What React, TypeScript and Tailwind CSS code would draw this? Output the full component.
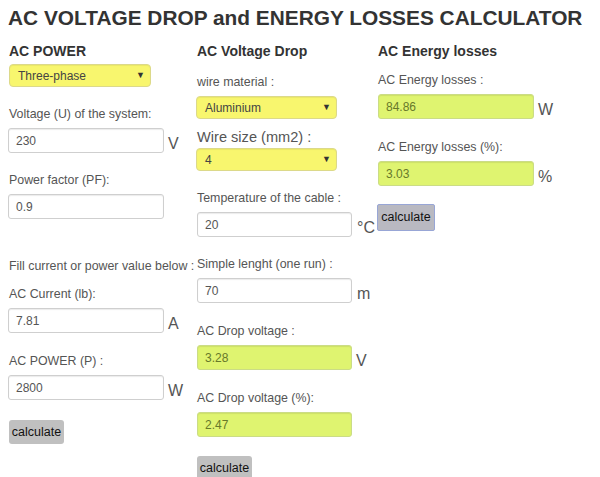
import React from "react";

function Label({ children, cls = "", big = false }: { children: React.ReactNode; cls?: string; big?: boolean }) {
  return (
    <div
      className={
        (big ? "text-[14.6px] leading-[18px] " : "text-[12.4px] leading-[16px] ") +
        "text-[#555] whitespace-nowrap " +
        cls
      }
    >
      {children}
    </div>
  );
}

function Field({
  value,
  unit,
  green = false,
  w = "w-[156px]",
  cls = "mt-[6px]",
  unitCls = "ml-1",
}: {
  value: string;
  unit?: string;
  green?: boolean;
  w?: string;
  cls?: string;
  unitCls?: string;
}) {
  return (
    <div className={"flex items-center " + cls}>
      <div
        className={
          w +
          " h-[25px] rounded-[3px] border pl-[7px] flex items-center text-[12px] shadow-[inset_0_1px_1px_rgba(0,0,0,0.08)] " +
          (green
            ? "bg-[#dff470] border-[#cbdc86] text-[#67792a]"
            : "bg-white border-[#cfcfcf] text-[#555]")
        }
      >
        {value}
      </div>
      {unit && <span className={"mt-[6px] text-[16px] leading-[18px] text-[#555] " + unitCls}>{unit}</span>}
    </div>
  );
}

function Select({ value, w, cls }: { value: string; w: string; cls: string }) {
  return (
    <div
      className={
        w +
        " h-[23px] rounded-[4px] border border-[#dcd98a] bg-[#f8f66e] flex items-center justify-between pl-[8px] pr-[5px] text-[12px] text-[#444] shadow-[inset_0_1px_1px_rgba(0,0,0,0.06)] " +
        cls
      }
    >
      <span>{value}</span>
      <span className="text-[9px] leading-[9px] text-[#333]">▼</span>
    </div>
  );
}

function Heading({ children }: { children: React.ReactNode }) {
  return <div className="text-[14px] leading-[16px] font-bold text-[#333] whitespace-nowrap">{children}</div>;
}

export default function App() {
  return (
    <div className="w-[600px] h-[477px] overflow-hidden bg-white font-['Liberation_Sans',Arial,sans-serif]">
      <div className="pl-2 pt-[6px] text-[20.85px] leading-[24px] font-bold text-[#333] whitespace-nowrap">
        AC VOLTAGE DROP and ENERGY LOSSES CALCULATOR
      </div>
      <div className="flex px-2 mt-[13px]">
        {/* Column 1 */}
        <div className="w-[189px] flex flex-col">
          <div className="ml-[1px]">
            <Heading>AC POWER</Heading>
          </div>
          <Select value="Three-phase" w="w-[142px]" cls="ml-[1px] mt-[5px]" />
          <Label cls="ml-[1px] mt-[19px]">Voltage (U) of the system:</Label>
          <Field value="230" unit="V" />
          <Label cls="ml-[1px] mt-[19px]">Power factor (PF):</Label>
          <Field value="0.9" />
          <Label cls="ml-[1px] mt-[39px]">Fill current or power value below :</Label>
          <Label cls="ml-[1px] mt-[12px]">AC Current (lb):</Label>
          <Field value="7.81" unit="A" />
          <Label cls="ml-[1px] mt-[20px]">AC POWER (P) :</Label>
          <Field value="2800" unit="W" />
          <div className="mt-[19px]">
            <button className="ml-[1px] w-[55px] h-[24px] rounded-[3px] bg-[#c0c0c0] text-[12.5px] text-[#111]">
              calculate
            </button>
          </div>
        </div>

        {/* Column 2 */}
        <div className="w-[181px] flex flex-col">
          <Heading>AC Voltage Drop</Heading>
          <Label cls="mt-[15px]">wire material :</Label>
          <Select value="Aluminium" w="w-[141px]" cls="-ml-[1px] mt-[6px]" />
          <Label big cls="mt-[9px]">Wire size (mm2) :</Label>
          <Select value="4" w="w-[141px]" cls="-ml-[1px] mt-[2px]" />
          <Label cls="mt-[19px]">Temperature of the cable :</Label>
          <Field value="20" unit="°C" w="w-[155px]" unitCls="ml-[5px]" />
          <Label cls="mt-[19px]">Simple lenght (one run) :</Label>
          <Field value="70" unit="m" w="w-[155px]" unitCls="ml-[5px]" />
          <Label cls="mt-[20px]">AC Drop voltage :</Label>
          <Field value="3.28" unit="V" green w="w-[155px]" />
          <Label cls="mt-[20px]">AC Drop voltage (%):</Label>
          <Field value="2.47" green w="w-[155px]" />
          <div className="mt-[18px]">
            <button className="w-[55px] h-[24px] rounded-[3px] bg-[#c0c0c0] text-[12.5px] text-[#111]">
              calculate
            </button>
          </div>
        </div>

        {/* Column 3 */}
        <div className="flex-1 flex flex-col">
          <Heading>AC Energy losses</Heading>
          <Label cls="mt-[13px]">AC Energy losses :</Label>
          <Field value="84.86" unit="W" green />
          <Label cls="mt-[20px]">AC Energy losses (%):</Label>
          <Field value="3.03" unit="%" green />
          <div className="mt-[18px]">
            <button className="-ml-[1px] w-[58px] h-[27px] rounded-[2px] border border-[#98a6d6] bg-[#b9b9c1] text-[12.5px] text-[#111]">
              calculate
            </button>
          </div>
        </div>
      </div>
    </div>
  );
}
